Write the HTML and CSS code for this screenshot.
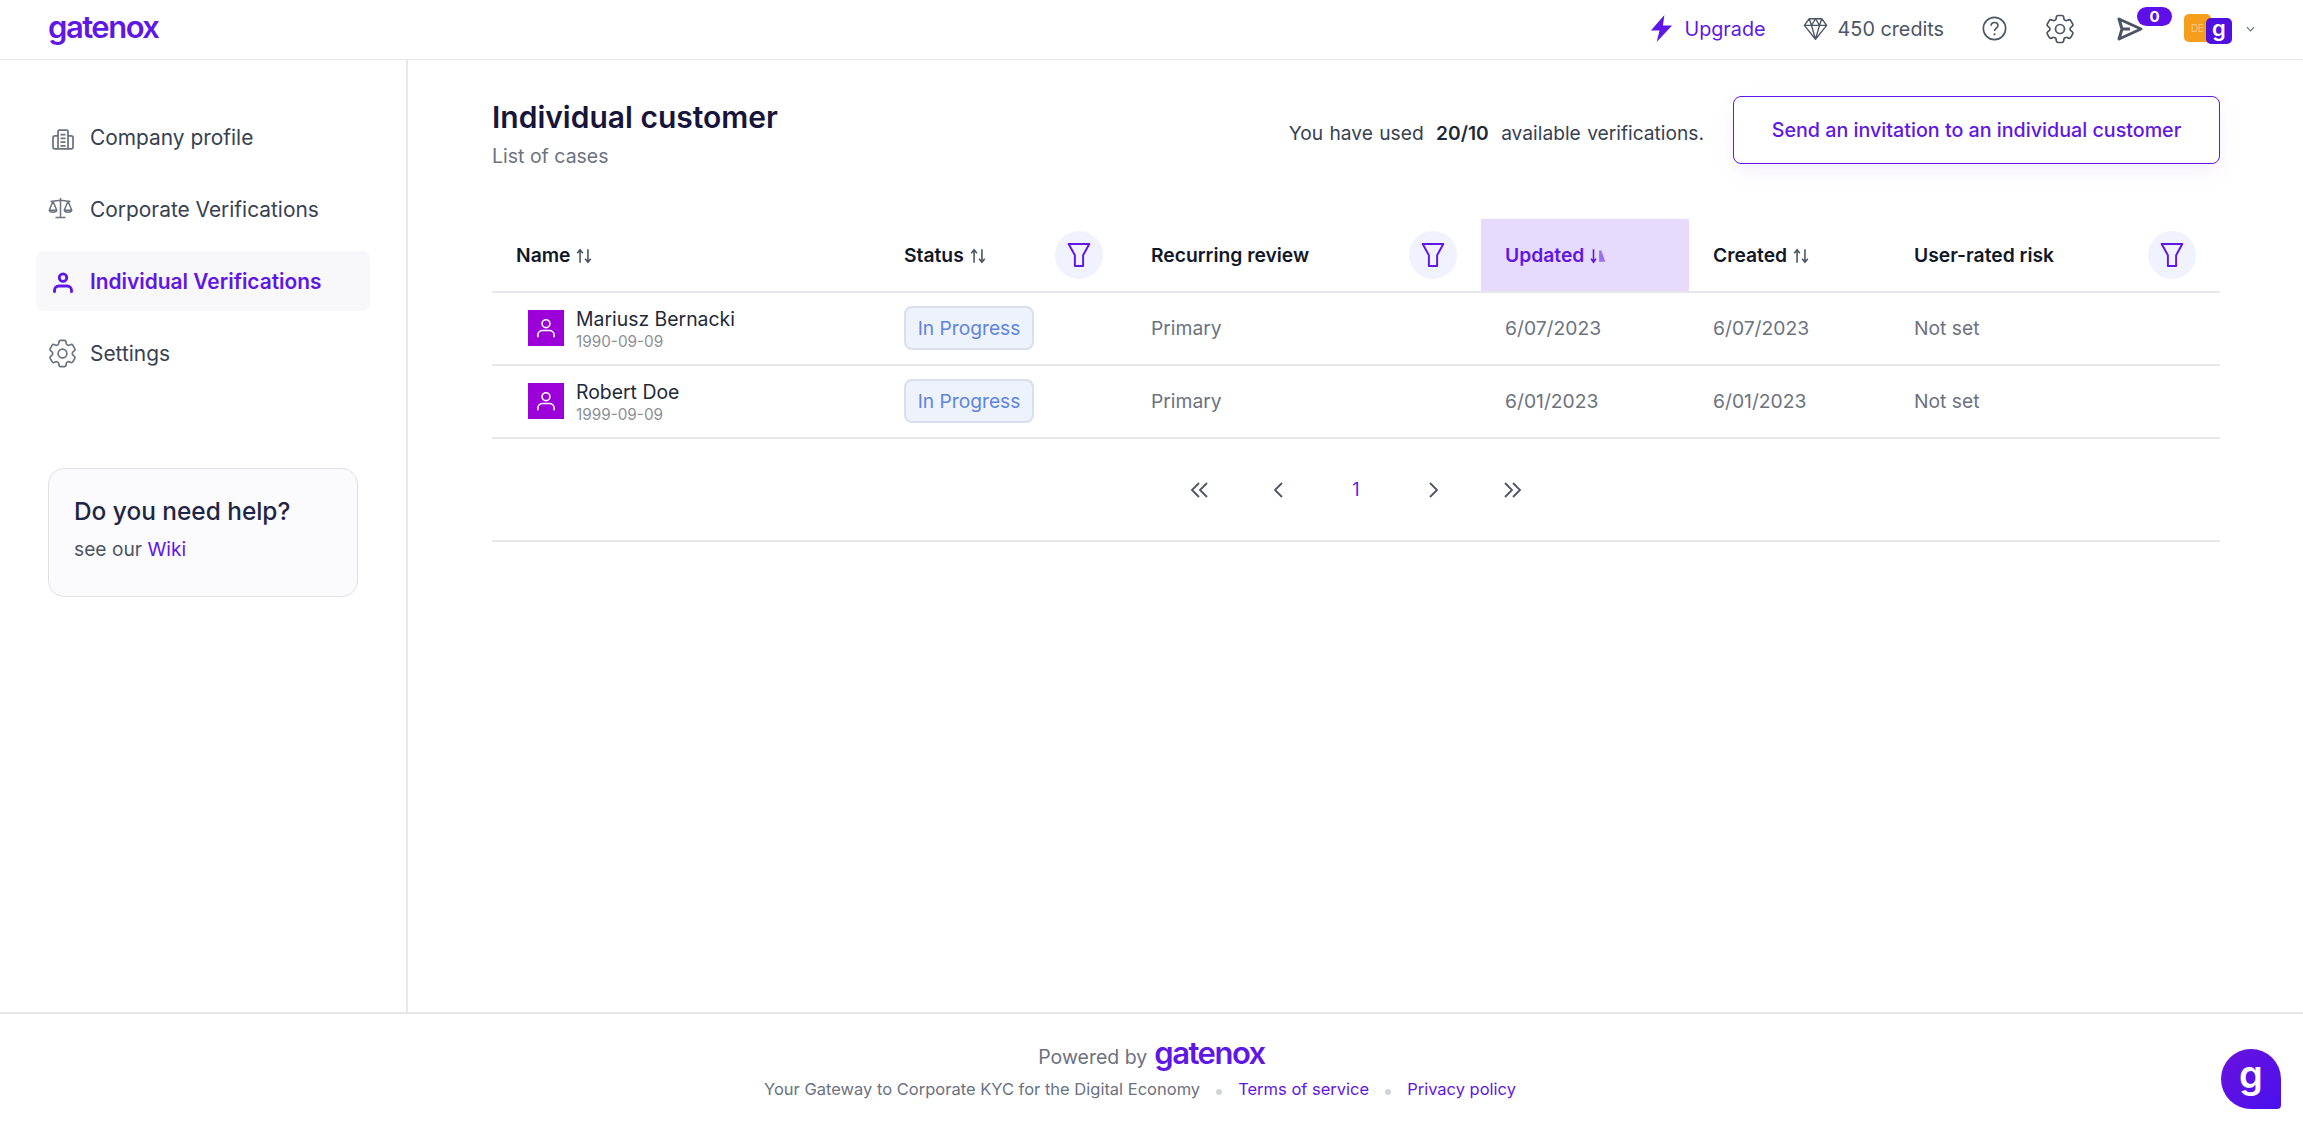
FILE: index.html
```html
<!DOCTYPE html>
<html lang="en">
<head>
<meta charset="UTF-8" />
<meta name="viewport" content="width=device-width, initial-scale=1" />
<title>Individual customer</title>
<link rel="stylesheet" href="styles.css">
</head>
<body>

<svg class="defs" aria-hidden="true">
  <symbol id="gear" viewBox="0 0 24 24">
    <path d="M9.594 3.94c.09-.542.56-.94 1.11-.94h2.593c.55 0 1.02.398 1.11.94l.213 1.281c.063.374.313.686.645.87.074.04.147.083.22.127.325.196.72.257 1.075.124l1.217-.456a1.125 1.125 0 0 1 1.37.49l1.296 2.247a1.125 1.125 0 0 1-.26 1.431l-1.003.827c-.293.241-.438.613-.43.992a7.723 7.723 0 0 1 0 .255c-.008.378.137.75.43.991l1.004.827c.424.35.534.955.26 1.43l-1.298 2.247a1.125 1.125 0 0 1-1.369.491l-1.217-.456c-.355-.133-.75-.072-1.076.124a6.47 6.47 0 0 1-.22.128c-.331.183-.581.495-.644.869l-.213 1.281c-.09.543-.56.94-1.11.94h-2.594c-.55 0-1.019-.398-1.11-.94l-.213-1.281c-.062-.374-.312-.686-.644-.87a6.52 6.52 0 0 1-.22-.127c-.325-.196-.72-.257-1.076-.124l-1.217.456a1.125 1.125 0 0 1-1.369-.49l-1.297-2.247a1.125 1.125 0 0 1 .26-1.431l1.004-.827c.292-.24.437-.613.43-.991a6.932 6.932 0 0 1 0-.255c.007-.38-.138-.751-.43-.992l-1.004-.827a1.125 1.125 0 0 1-.26-1.43l1.297-2.247a1.125 1.125 0 0 1 1.37-.491l1.216.456c.356.133.751.072 1.076-.124.072-.044.146-.086.22-.128.332-.183.582-.495.644-.869l.214-1.28Z" fill="none" stroke="currentColor" stroke-width="1.15" stroke-linejoin="round"/>
    <circle cx="12" cy="12" r="3" fill="none" stroke="currentColor" stroke-width="1.15"/>
  </symbol>
  <symbol id="funnel" viewBox="0 0 24 24">
    <path d="M2.500 1.800h19l-5.700 10.400v10h-7.600v-10z" fill="none" stroke="currentColor" stroke-width="1.800" stroke-linejoin="round"/>
  </symbol>
  <symbol id="sort" viewBox="0 0 16 16">
    <path d="M4.500 14V3M2 5.500l2.500-3 2.500 3M11.500 2v11M9 10.500l2.500 3 2.500-3" fill="none" stroke="currentColor" stroke-width="1.400"/>
  </symbol>
  <symbol id="person" viewBox="0 0 24 24">
    <circle cx="12" cy="8" r="3.600" fill="none" stroke="currentColor" stroke-width="1.500"/>
    <path d="M4.500 20v-1.500c0-2.500 2-4.200 4.500-4.200h6c2.500 0 4.500 1.700 4.500 4.200V20" fill="none" stroke="currentColor" stroke-width="1.500" stroke-linecap="round"/>
  </symbol>
</svg>

<header class="topbar">
  <a class="logo">gatenox</a>
  <div class="topbar-right">
    <a class="upgrade">
      <svg class="ico-bolt" viewBox="0 0 24 28"><path d="M15 0 1 16h9L7 28 23 11h-9.500z" fill="currentColor"/></svg>
      Upgrade
    </a>
    <span class="credits">
      <svg class="ico-gem" viewBox="0 0 28 26"><path d="M7 1.500h14l5.500 7.500L14 24.500 1.500 9zM1.500 9h25M9.500 9 14 24.500 18.500 9M7 1.500 9.500 9 14 1.500 18.500 9 21 1.500" fill="none" stroke="currentColor" stroke-width="1.500" stroke-linejoin="round"/></svg>
      450 credits
    </span>
    <svg class="ico-help" viewBox="0 0 28 28"><circle cx="14" cy="14" r="12.500" fill="none" stroke="currentColor" stroke-width="1.800"/><path d="M10.200 11c0-2.300 1.700-3.800 3.900-3.800s3.800 1.400 3.800 3.400c0 3-3.900 3-3.900 6.200" fill="none" stroke="currentColor" stroke-width="1.800"/><circle cx="14" cy="20.500" r="1.200" fill="currentColor"/></svg>
    <svg class="ico-gear"><use href="#gear"/></svg>
    <span class="send">
      <svg class="ico-send" viewBox="0 0 26 24"><path d="M2 2 24 12 2 22 5 12zM5 12H13" fill="none" stroke="currentColor" stroke-width="3" stroke-linejoin="round"/></svg>
      <b class="send-count">0</b>
    </span>
    <span class="account">
      <span class="acc-de">DE</span>
      <span class="acc-g">g</span>
    </span>
    <svg class="ico-caret" viewBox="0 0 10 6"><path d="M1 1l4 4 4-4" fill="none" stroke="currentColor" stroke-width="1.300"/></svg>
  </div>
</header>

<div class="middle">
  <aside class="sidebar">
    <nav class="nav">
      <a class="nav-item">
        <svg class="nav-ico" viewBox="0 0 24 24"><path d="M8 21.500V7.500c0-.6.4-1 1-1h6c.6 0 1 .4 1 1v14M8 11H5.500C4.700 11 4 11.700 4 12.500V20c0 .8.7 1.500 1.500 1.500h13c.8 0 1.500-.7 1.500-1.500v-7.500c0-.8-.7-1.500-1.500-1.500H16M10 10h4M10 13h4M10 16h4M10 19h4" fill="none" stroke="currentColor" stroke-width="1.400"/></svg>
        Company profile
      </a>
      <a class="nav-item">
        <svg class="nav-ico" viewBox="0 0 24 24"><path d="M10 3.200v15.300M6 18.800h8M2 6l8-1 8 1M4 5.800 1 13h6zM16 5.800 13 13h6zM1 13c.4 2 5.600 2 6 0M13 13c.4 2 5.600 2 6 0" fill="none" stroke="currentColor" stroke-width="1.200" stroke-linejoin="round"/></svg>
        Corporate Verifications
      </a>
      <a class="nav-item active">
        <svg class="nav-ico" viewBox="0 0 24 24"><circle cx="12" cy="9.300" r="3" fill="none" stroke="currentColor" stroke-width="2.300"/><path d="M5.200 20.500v-1c0-2 1.600-3.500 3.500-3.500h6.600c1.900 0 3.500 1.500 3.500 3.500v1" fill="none" stroke="currentColor" stroke-width="2.300" stroke-linecap="round"/></svg>
        Individual Verifications
      </a>
      <a class="nav-item">
        <svg class="nav-ico nav-ico-gear"><use href="#gear"/></svg>
        Settings
      </a>
    </nav>
    <div class="help-card">
      <div class="help-title">Do you need help?</div>
      <div class="help-text">see our <a class="link">Wiki</a></div>
    </div>
  </aside>

  <main class="content">
    <div class="page-head">
      <div>
        <h1 class="page-title">Individual customer</h1>
        <div class="page-sub">List of cases</div>
      </div>
      <div class="page-actions">
        <span class="usage">You have used <b>20/10</b> available verifications.</span>
        <button class="invite">Send an invitation to an individual customer</button>
      </div>
    </div>

    <table class="cases">
      <colgroup>
        <col class="c-name"><col class="c-status"><col class="c-review"><col class="c-updated"><col class="c-created"><col class="c-risk">
      </colgroup>
      <thead>
        <tr>
          <th>Name <svg class="sort"><use href="#sort"/></svg></th>
          <th><div class="th-filter"><span>Status <svg class="sort"><use href="#sort"/></svg></span><span class="filter"><svg><use href="#funnel"/></svg></span></div></th>
          <th><div class="th-filter"><span>Recurring review</span><span class="filter"><svg><use href="#funnel"/></svg></span></div></th>
          <th class="sorted">Updated
            <svg class="sort" viewBox="0 0 16 16"><path d="M4 2v11M1.800 10.500 4 13.500l2.200-3" fill="none" stroke="currentColor" stroke-width="1.400"/><path d="M9 3h2l3.500 10H9z" fill="currentColor" opacity=".55"/></svg>
          </th>
          <th>Created <svg class="sort"><use href="#sort"/></svg></th>
          <th><div class="th-filter"><span>User-rated risk</span><span class="filter"><svg><use href="#funnel"/></svg></span></div></th>
        </tr>
      </thead>
      <tbody>
        <tr>
          <td>
            <div class="person">
              <span class="avatar"><svg><use href="#person"/></svg></span>
              <div class="person-text"><div class="person-name">Mariusz Bernacki</div><div class="person-date">1990-09-09</div></div>
            </div>
          </td>
          <td><span class="badge">In Progress</span></td>
          <td>Primary</td>
          <td>6/07/2023</td>
          <td>6/07/2023</td>
          <td>Not set</td>
        </tr>
        <tr>
          <td>
            <div class="person">
              <span class="avatar"><svg><use href="#person"/></svg></span>
              <div class="person-text"><div class="person-name">Robert Doe</div><div class="person-date">1999-09-09</div></div>
            </div>
          </td>
          <td><span class="badge">In Progress</span></td>
          <td>Primary</td>
          <td>6/01/2023</td>
          <td>6/01/2023</td>
          <td>Not set</td>
        </tr>
      </tbody>
    </table>

    <div class="pager">
      <svg viewBox="0 0 22 16"><path d="M10 1 3 8l7 7M18 1l-7 7 7 7" fill="none" stroke="currentColor" stroke-width="1.800"/></svg>
      <svg viewBox="0 0 22 16"><path d="M15 1 8 8l7 7" fill="none" stroke="currentColor" stroke-width="1.800"/></svg>
      <span class="pager-num">1</span>
      <svg viewBox="0 0 22 16"><path d="m7 1 7 7-7 7" fill="none" stroke="currentColor" stroke-width="1.800"/></svg>
      <svg viewBox="0 0 22 16"><path d="m4 1 7 7-7 7M12 1l7 7-7 7" fill="none" stroke="currentColor" stroke-width="1.800"/></svg>
    </div>
  </main>
</div>

<footer class="footer">
  <div class="powered">Powered by <span class="logo">gatenox</span></div>
  <div class="foot-links">
    <span>Your Gateway to Corporate KYC for the Digital Economy</span>
    <i class="dot"></i>
    <a class="link">Terms of service</a>
    <i class="dot"></i>
    <a class="link">Privacy policy</a>
  </div>
</footer>

<div class="chat"><span>g</span></div>

</body>
</html>
```

FILE: styles.css
```css
* { box-sizing: border-box; }

html, body {
  margin: 0; padding: 0; height: 100vh; overflow: hidden;
}

body {
  display: flex; flex-direction: column;
  font-family: "Inter", "Liberation Sans", sans-serif;
  background: #fff;
  color: #374151;
}

.defs { position: absolute; width: 0; height: 0; }

.link { color: #5f17e5; }

.logo {
  font-size: 31px;
  font-weight: 600;
  letter-spacing: -1.5px;
  color: #5f17e5;
  line-height: 1;
}

/* top bar */
.topbar {
  height: 60px;
  flex-shrink: 0;
  display: flex;
  align-items: center;
  justify-content: space-between;
  padding: 0 48px 2px 48px;
  border-bottom: 1px solid #e5e7eb;
}
.topbar .logo { margin-bottom: 4px; }
.topbar-right {
  display: flex;
  align-items: center;
  font-size: 19.8px;
  color: #4b5563;
}
.upgrade {
  display: flex; align-items: center; gap: 10px;
  color: #5f17e5;
}
.ico-bolt { width: 25px; height: 27px; }
.credits {
  display: flex; align-items: center; gap: 10px;
  margin-left: 37px;
}
.ico-gem { width: 25px; height: 24px; }
.ico-help { width: 25px; height: 25px; margin-left: 38px; }
.ico-gear { width: 36px; height: 36px; margin-left: 35px; }
.send {
  position: relative;
  width: 26px; height: 24px;
  margin-left: 39px;
}
.ico-send { width: 26px; height: 24px; display: block; color: #4b5563; }
.send-count {
  position: absolute;
  top: -10px; left: 20px;
  width: 35px; height: 19px;
  border-radius: 10px;
  background: #5f0fe8;
  color: #fff;
  font-size: 15px;
  line-height: 19px;
  text-align: center;
}
.account {
  position: relative;
  width: 48px; height: 30px;
  margin-left: 41px;
}
.acc-de {
  position: absolute; left: 0; top: 0;
  width: 27px; height: 28px;
  border-radius: 5px;
  background: #f59e1b;
  color: #f9c98a;
  font-size: 10px;
  line-height: 28px;
  text-align: center;
}
.acc-g {
  position: absolute; left: 22px; top: 4px;
  width: 26px; height: 26px;
  border-radius: 5px;
  background: #4f10e0;
  color: #fff;
  font-size: 22px;
  font-weight: 600;
  line-height: 20px;
  text-align: center;
}
.ico-caret { width: 9px; height: 6px; margin-left: 14px; color: #6b7280; }

/* sidebar */
.middle { flex: 1; display: flex; min-height: 0; }
.sidebar {
  width: 408px;
  flex-shrink: 0;
  padding: 47px 36px 0 36px;
  border-right: 2px solid #e5e7eb;
}
.nav { display: flex; flex-direction: column; gap: 12px; }
.nav-item {
  display: flex; align-items: center; gap: 12px;
  height: 60px;
  padding-left: 12px;
  border-radius: 8px;
  font-size: 20.9px;
  color: #374151;
}
.nav-ico { width: 30px; height: 30px; color: #6b7280; flex-shrink: 0; }
.nav-ico-gear { width: 35px; height: 35px; margin: 0 -1.5px 0 -3.5px; }
.nav-item.active {
  background: #f8f8fb;
  color: #5f17e5;
  font-weight: 600;
}
.nav-item.active .nav-ico { color: #5f17e5; }
.help-card {
  margin: 85px 0 0 12px;
  width: 310px; height: 129px;
  padding: 26px 25px;
  background: #fbfbfd;
  border: 1px solid #dfe1e8;
  border-radius: 16px;
}
.help-title { font-size: 24.4px; font-weight: 500; color: #1f2544; line-height: 32px; }
.help-text { font-size: 19.2px; color: #4b5563; margin-top: 10px; }

/* main */
.content {
  flex: 1;
  padding: 36px 83px 0 84px;
}
.page-head {
  display: flex;
  justify-content: space-between;
  align-items: flex-start;
  height: 123px;
}
.page-title {
  margin: 3px 0 0 0;
  font-size: 30px;
  font-weight: 600;
  line-height: 36px;
  color: #17153b;
}
.page-sub { margin-top: 9px; font-size: 19.5px; line-height: 24px; color: #6b7280; }
.page-actions { display: flex; align-items: center; gap: 29px; }
.usage { font-size: 19.2px; color: #374151; word-spacing: 1px; margin-top: 6px; }
.usage b { font-weight: 600; color: #1f2937; margin: 0 6px; }
.invite {
  width: 487px; height: 68px;
  background: #fff;
  border: 1.5px solid #5f17e5;
  border-radius: 8px;
  box-shadow: 0 8px 24px rgba(95, 23, 229, .06);
  color: #5f17e5;
  font: 500 19.7px "Inter", "Liberation Sans", sans-serif;
}

/* table */
.cases {
  width: 100%;
  border-collapse: collapse;
  table-layout: fixed;
}
.c-name { width: 388px; }
.c-status { width: 247px; }
.c-review { width: 354px; }
.c-updated { width: 208px; }
.c-created { width: 201px; }
.cases th {
  height: 73px;
  padding: 0 24px;
  text-align: left;
  font-size: 19.3px;
  font-weight: 600;
  color: #111827;
  border-bottom: 2px solid #e5e7eb;
}
.cases th.sorted { background: #e7dbfd; color: #5f17e5; }
.cases td {
  height: 73px;
  padding: 0 24px 2px;
  font-size: 19.3px;
  color: #6b7280;
  border-bottom: 2px solid #e5e7eb;
}
.sort { width: 18px; height: 18px; vertical-align: -3px; color: #4b5563; }
.sorted .sort { color: #5f17e5; }
.th-filter {
  display: flex;
  align-items: center;
  justify-content: space-between;
}
.filter {
  width: 48px; height: 48px;
  border-radius: 50%;
  background: #f0f3fd;
  color: #5f17e5;
  display: flex; align-items: center; justify-content: center;
}
.filter svg { width: 26px; height: 26px; }
.person {
  display: flex; align-items: center; gap: 12px;
  padding-left: 12px;
}
.avatar {
  width: 36px; height: 36px;
  background: #9b00d9;
  color: #fff;
  display: flex; align-items: center; justify-content: center;
}
.avatar svg { width: 26px; height: 26px; }
.person-text { padding-top: 5px; }
.person-name { font-size: 19.4px; color: #1f2937; line-height: 24px; }
.person-date { font-size: 15.3px; color: #8b8f96; line-height: 22px; }
.badge {
  display: inline-block;
  vertical-align: middle;
  width: 130px; height: 44px;
  line-height: 40px;
  text-align: center;
  background: #eef2fb;
  border: 2px solid #d9dfef;
  border-radius: 8px;
  font-size: 19.2px;
  color: #5f84e0;
}

/* pager */
.pager {
  height: 103px;
  display: flex;
  align-items: center;
  justify-content: center;
  gap: 56px;
  border-bottom: 2px solid #e5e7eb;
  color: #4b5563;
}
.pager svg { width: 22px; height: 16px; }
.pager-num { width: 22px; text-align: center; font-size: 18px; color: #5f17e5; }

/* footer */
.footer {
  height: 119px;
  flex-shrink: 0;
  border-top: 2px solid #e5e7eb;
  display: flex;
  flex-direction: column;
  align-items: center;
  padding-top: 23px;
  color: #6b7280;
}
.powered {
  display: flex; align-items: baseline; gap: 7px;
  font-size: 19.5px;
  line-height: 34px;
}
.foot-links {
  display: flex; align-items: center;
  margin-top: 3px;
  padding-right: 23px;
  font-size: 16.5px;
  line-height: 24px;
}
.dot {
  width: 6px; height: 6px;
  margin: 6px 16px 0 16px;
  border-radius: 50%;
  background: #d1d5db;
}

.chat {
  position: absolute;
  left: 2221px; top: 1049px;
  width: 60px; height: 60px;
  border-radius: 30px 30px 4px 30px;
  background: linear-gradient(135deg, #6a12dd, #4a10ee);
  color: #fff;
  font-size: 38px;
  font-weight: 600;
  line-height: 50px;
  text-align: center;
}
```
